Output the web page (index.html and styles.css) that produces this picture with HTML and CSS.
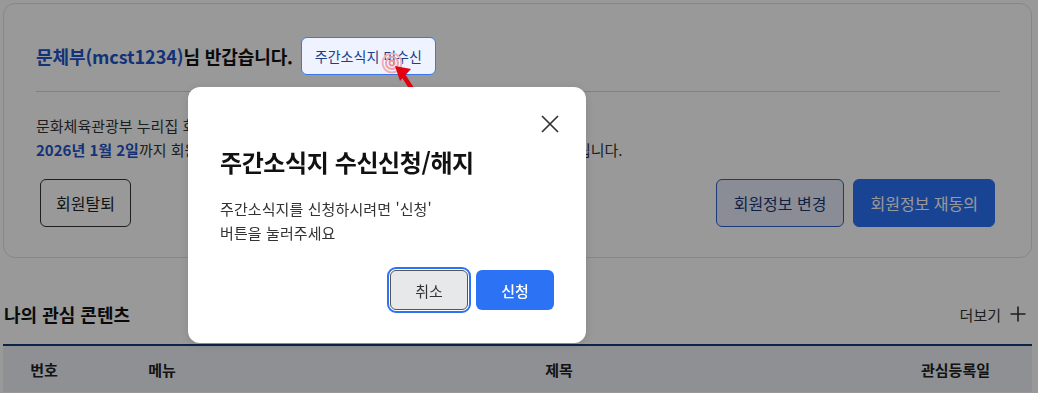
FILE: index.html
```html
<!DOCTYPE html>
<html lang="ko">
<head>
    <meta charset="UTF-8">
    <meta name="viewport" content="width=device-width, initial-scale=1.0">
    <title>마이페이지</title>
    <link rel="stylesheet" href="styles.css">
</head>
<body>
    <div class="page">
        <section class="member-card">
            <div class="greeting-row">
                <h1 class="greeting"><span class="user-name">문체부(mcst1234)</span>님 반갑습니다.</h1>
                <button class="news-button">주간소식지 미수신</button>
            </div>
            <hr class="divider">
            <p class="notice">
                문화체육관광부 누리집 회원정보 보유기간이 만료될 예정입니다.<br>
                <b class="date">2026년 1월 2일</b>까지 회원정보 재동의를 하지 않으시면 회원 정보가 자동으로 모두 삭제됩니다.
            </p>
            <div class="card-actions">
                <button class="btn btn-line">회원탈퇴</button>
                <div class="card-actions-right">
                    <button class="btn btn-soft">회원정보 변경</button>
                    <button class="btn btn-primary">회원정보 재동의</button>
                </div>
            </div>
        </section>

        <section class="interest">
            <div class="interest-head">
                <h2>나의 관심 콘텐츠</h2>
                <a class="more" href="#">더보기
                    <svg width="18" height="18" viewBox="0 0 18 18"><path d="M9 1.5v15M1.5 9h15" stroke="#333" stroke-width="1.6" fill="none"/></svg>
                </a>
            </div>
            <div class="table-head">
                <span>번호</span>
                <span>메뉴</span>
                <span>제목</span>
                <span>관심등록일</span>
            </div>
        </section>
    </div>

    <div class="dim"></div>

    <!-- 안내 포인터 -->
    <svg class="pointer" width="40" height="40" viewBox="0 0 40 40">
        <circle cx="12" cy="12" r="9.5" fill="none" stroke="#f0b0b6" stroke-width="2"/>
        <circle cx="12" cy="12" r="6" fill="none" stroke="#eea0a8" stroke-width="2"/>
        <circle cx="12" cy="12" r="2.5" fill="none" stroke="#ea8e98" stroke-width="1.8"/>
        <path d="M23 24 L32 38" stroke="#e3000f" stroke-width="4.5" stroke-linecap="round"/>
        <path d="M15 15 L31 18 L20 30 Z" fill="#e3000f"/>
    </svg>

    <div class="modal">
        <button class="modal-close" aria-label="닫기">
            <svg width="18" height="18" viewBox="0 0 18 18"><path d="M1 1L17 17M17 1L1 17" stroke="#333" stroke-width="1.7" fill="none"/></svg>
        </button>
        <h3 class="modal-title">주간소식지 수신신청/해지</h3>
        <p class="modal-text">주간소식지를 신청하시려면 '신청'<br>버튼을 눌러주세요</p>
        <div class="modal-actions">
            <button class="btn-cancel">취소</button>
            <button class="btn-apply">신청</button>
        </div>
    </div>
</body>
</html>
```

FILE: styles.css
```css
* { margin: 0; padding: 0; box-sizing: border-box; }
body {
    font-family: "Noto Sans CJK KR", "Noto Sans", sans-serif;
    background: #fff;
    color: #222;
    width: 1038px;
    height: 393px;
    overflow: hidden;
}
button {
    font-family: inherit;
    cursor: pointer;
}
.page {
    padding: 3px 6px 0 3px;
}
.member-card {
    border: 1px solid #dfe2e8;
    border-radius: 12px;
    padding: 33px 36px 30px 32px;
}
.greeting-row {
    display: flex;
    align-items: center;
    gap: 8px;
}
.greeting {
    font-size: 18px;
    line-height: 26px;
    font-weight: 700;
    color: #111;
    letter-spacing: -0.1px;
}
.user-name {
    color: #1f55c8;
}
.news-button {
    position: relative;
    z-index: 20;
    height: 38px;
    padding: 0 13px;
    font-size: 14px;
    color: #1c3e86;
    background: #eef3ff;
    border: 1px solid #3b77e8;
    border-radius: 6px;
}
.divider {
    border: 0;
    border-top: 1px solid #d5d8de;
    margin: 16px 0 0 0;
    margin-right: -5px;
}
.notice {
    margin-top: 22px;
    font-size: 15px;
    line-height: 24px;
    color: #333;
}
.date {
    color: #1f55c8;
}
.card-actions {
    display: flex;
    justify-content: space-between;
    margin-top: 17px;
    margin-left: 4px;
}
.card-actions-right {
    display: flex;
    gap: 9px;
}
.btn {
    height: 48px;
    padding: 0 15px;
    font-size: 16px;
    border-radius: 6px;
}
.btn-line {
    background: #fff;
    border: 1px solid #333;
    color: #222;
}
.btn-soft {
    background: #e6ecf8;
    border: 1px solid #2f63c8;
    color: #1c3670;
    padding: 0 17px;
}
.btn-primary {
    background: #2b72f5;
    border: 1px solid #2b72f5;
    color: #fff;
    padding: 0 16px;
}
.interest {
    margin-top: 41px;
}
.interest-head {
    display: flex;
    justify-content: space-between;
    align-items: center;
    padding: 0 5px 0 1px;
}
.interest-head h2 {
    font-size: 18px;
    line-height: 30px;
    font-weight: 700;
    color: #111;
}
.more {
    display: flex;
    align-items: center;
    gap: 8px;
    font-size: 15px;
    color: #333;
    text-decoration: none;
}
.table-head {
    margin-top: 15px;
    border-top: 2px solid #143c76;
    background: #eef0f5;
    height: 48px;
    display: grid;
    grid-template-columns: 82px 154px 640px 1fr;
    align-items: center;
    text-align: center;
    font-size: 15px;
    font-weight: 700;
    color: #222;
}
.dim {
    position: fixed;
    inset: 0;
    background: rgba(0, 0, 0, 0.4);
    z-index: 10;
}
.pointer {
    position: absolute;
    left: 380px;
    top: 51px;
    z-index: 30;
}
.modal {
    position: absolute;
    left: 188px;
    top: 87px;
    width: 398px;
    height: 256px;
    z-index: 40;
    background: #fff;
    border-radius: 12px;
    padding: 59px 32px 32px 32px;
    box-shadow: 0 2px 8px rgba(0, 0, 0, 0.12);
}
.modal-close {
    position: absolute;
    top: 28px;
    right: 27px;
    width: 18px;
    height: 18px;
    border: 0;
    background: none;
    display: flex;
}
.modal-title {
    font-size: 24px;
    line-height: 32px;
    font-weight: 700;
    color: #111;
    letter-spacing: -0.4px;
}
.modal-text {
    margin-top: 19px;
    font-size: 15px;
    line-height: 24px;
    color: #333;
    letter-spacing: 0.1px;
}
.modal-actions {
    display: flex;
    justify-content: flex-end;
    gap: 8px;
    margin-top: 25px;
}
.btn-cancel, .btn-apply {
    width: 78px;
    height: 40px;
    font-size: 15px;
    border-radius: 6px;
}
.btn-cancel {
    background: #e7e8ea;
    border: 1px solid #555;
    color: #333;
    outline: 2px solid #2b72f5;
    outline-offset: 1px;
}
.btn-apply {
    background: #2b72f5;
    border: 0;
    color: #fff;
    font-weight: 500;
}
```
